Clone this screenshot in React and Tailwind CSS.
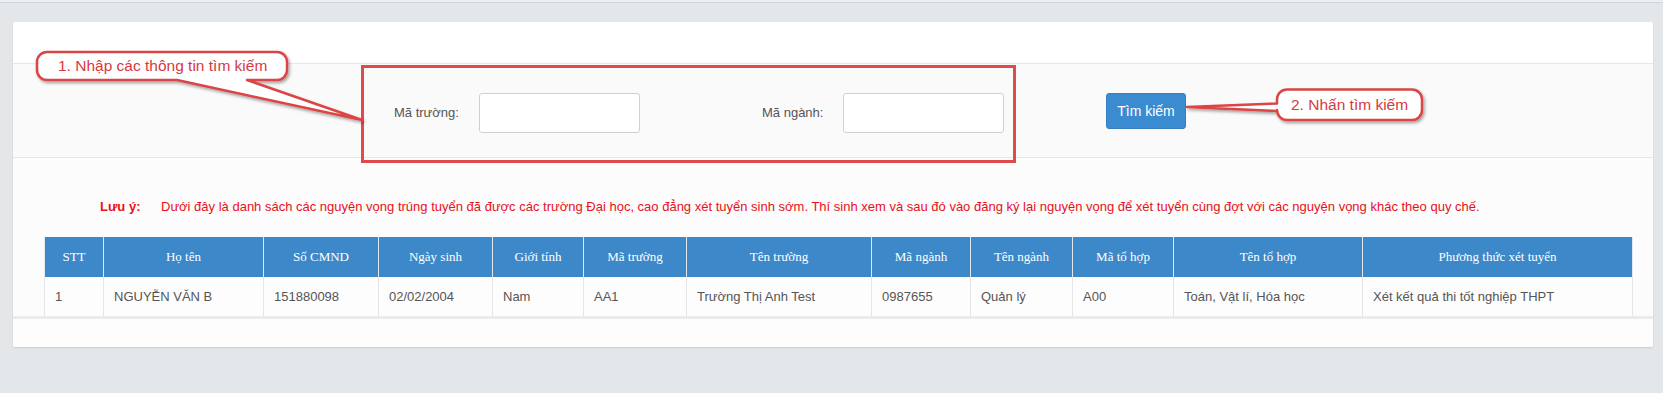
import React from "react";

const headers = [
  ["STT", 59],
  ["Họ tên", 160],
  ["Số CMND", 115],
  ["Ngày sinh", 114],
  ["Giới tính", 91],
  ["Mã trường", 103],
  ["Tên trường", 185],
  ["Mã ngành", 99],
  ["Tên ngành", 102],
  ["Mã tổ hợp", 101],
  ["Tên tổ hợp", 189],
  ["Phương thức xét tuyển", 270],
];

const row = [
  "1",
  "NGUYỄN VĂN B",
  "151880098",
  "02/02/2004",
  "Nam",
  "AA1",
  "Trường Thị Anh Test",
  "0987655",
  "Quản lý",
  "A00",
  "Toán, Vật lí, Hóa học",
  "Xét kết quả thi tốt nghiệp THPT",
];

function Overlay() {
  return (
    <svg
      className="absolute left-0 top-0 pointer-events-none"
      width="1663"
      height="393"
      viewBox="0 0 1663 393"
    >
      <defs>
        <filter id="sh" x="-20%" y="-50%" width="140%" height="200%">
          <feDropShadow dx="1.5" dy="2" stdDeviation="1.5" floodColor="#000" floodOpacity="0.35" />
        </filter>
      </defs>
      <rect x="362.5" y="66.5" width="652" height="95" fill="none" stroke="#df4a4a" strokeWidth="3" />
      <path
        d="M 47 52 H 277 A 10 10 0 0 1 287 62 V 70 A 10 10 0 0 1 277 80 H 247 L 362 120 L 177 80 H 47 A 10 10 0 0 1 37 70 V 62 A 10 10 0 0 1 47 52 Z"
        fill="#ffffff"
        stroke="#dc4545"
        strokeWidth="2.5"
        strokeLinejoin="round"
        filter="url(#sh)"
      />
      <path
        d="M 1287 89.5 H 1412 A 10 10 0 0 1 1422 99.5 V 110 A 10 10 0 0 1 1412 120 H 1287 A 10 10 0 0 1 1277 110 V 111 L 1187 107 L 1277 103.5 V 99.5 A 10 10 0 0 1 1287 89.5 Z"
        fill="#ffffff"
        stroke="#dc4545"
        strokeWidth="2.5"
        strokeLinejoin="round"
        filter="url(#sh)"
      />
    </svg>
  );
}

export default function App() {
  return (
    <div
      className="relative w-[1663px] h-[393px] bg-[#e4e7ea] overflow-hidden"
      style={{ fontFamily: '"Liberation Sans", Arial, sans-serif' }}
    >
      <div className="h-[2px] bg-[#eceef0]" />
      <div className="h-px bg-[#d3d6d9]" />
      <div className="ml-[13px] mr-[10px] mt-[19px] rounded-[3px] bg-white shadow-[0_1px_2px_rgba(0,0,0,0.12)] overflow-hidden">
        <div className="h-[42px] bg-white border-b border-[#e7e7e7]" />
        <div className="h-[94px] bg-[#fafafa] border-b border-[#e7e7e7] flex items-start pt-[29px] pl-[381px]">
          <div className="flex items-center h-[40px]">
            <span className="w-[85px] text-[13px] text-[#555]">Mã trường:</span>
            <div className="w-[161px] h-[40px] bg-white border border-[#cfcfcf] rounded-[3px]" />
            <span className="ml-[122px] w-[81px] text-[13px] text-[#555]">Mã ngành:</span>
            <div className="w-[161px] h-[40px] bg-white border border-[#cfcfcf] rounded-[3px]" />
          </div>
          <button className="ml-[102px] w-[80px] h-[36px] rounded-[3px] bg-[#3b8bd0] text-white text-[14px] border border-[#3580c2]">
            Tìm kiếm
          </button>
        </div>
        <div className="bg-[#fcfcfc]">
          <div className="pt-[40px] pl-[87px] h-[79px] text-[13px] leading-[18px] text-[#e8101b]">
            <span className="inline-block w-[61px] font-bold">Lưu ý:</span>
            <span>
              Dưới đây là danh sách các nguyện vọng trúng tuyển đã được các trường Đại học, cao đẳng xét tuyển sinh sớm. Thí sinh xem và sau đó vào đăng ký lại nguyện vọng để xét tuyển cùng đợt với các nguyện vọng khác theo quy chế.
            </span>
          </div>
          <div className="border-b-[3px] border-[#ebebeb]">
            <table className="ml-[31px] w-[1588px] table-fixed border-collapse">
              <colgroup>
                {headers.map(([h, w]) => (
                  <col key={h} style={{ width: w }} />
                ))}
              </colgroup>
              <thead>
                <tr className="h-[40px] bg-[#3d88c9]">
                  {headers.map(([h]) => (
                    <th
                      key={h}
                      className="border-x border-[#dfe6ee] text-white font-normal text-[13px] text-center"
                      style={{ fontFamily: '"Liberation Serif", "Times New Roman", serif' }}
                    >
                      {h}
                    </th>
                  ))}
                </tr>
              </thead>
              <tbody>
                <tr className="h-[39px] bg-[#fdfdfd]">
                  {row.map((c, i) => (
                    <td
                      key={i}
                      className="border-x border-[#e6e6e6] pl-[10px] text-[13px] text-[#555] whitespace-nowrap"
                    >
                      {c}
                    </td>
                  ))}
                </tr>
              </tbody>
            </table>
          </div>
          <div className="h-[28px] bg-[#fdfdfd]" />
        </div>
      </div>
      <Overlay />
      <div className="absolute left-[58px] top-[56px] text-[15.5px] leading-[20px] text-[#d8383f]">
        1. Nhập các thông tin tìm kiếm
      </div>
      <div className="absolute left-[1291px] top-[95px] text-[15.5px] leading-[20px] text-[#d8383f]">
        2. Nhấn tìm kiếm
      </div>
    </div>
  );
}
